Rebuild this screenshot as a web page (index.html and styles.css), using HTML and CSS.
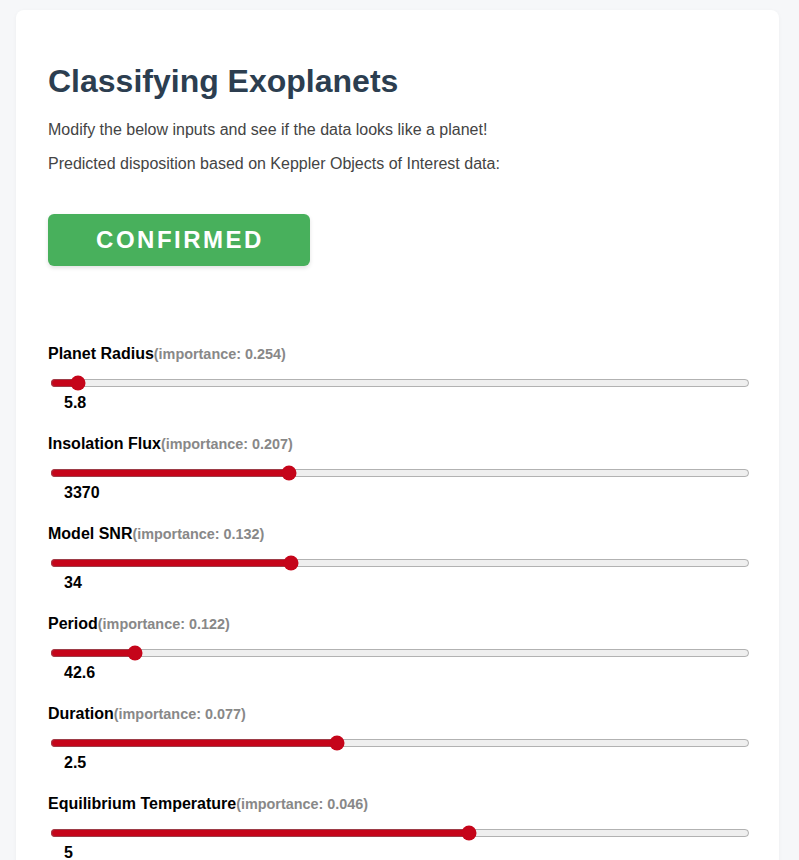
FILE: index.html
```html
<!DOCTYPE html>
<html>
<head>
<meta charset="utf-8">
<link rel="stylesheet" href="styles.css">
</head>
<body>
<main class="card">
  <h1 class="title">Classifying Exoplanets</h1>
  <p class="text">Modify the below inputs and see if the data looks like a planet!</p>
  <p class="text">Predicted disposition based on Keppler Objects of Interest data:</p>
  <div class="result">CONFIRMED</div>
  <div class="fields">
    <div class="field">
      <label class="label">Planet Radius<span class="imp">(importance: 0.254)</span></label>
      <input class="slider" type="range" min="0" max="1000" value="29">
      <div class="value">5.8</div>
    </div>
    <div class="field">
      <label class="label">Insolation Flux<span class="imp">(importance: 0.207)</span></label>
      <input class="slider" type="range" min="0" max="1000" value="338">
      <div class="value">3370</div>
    </div>
    <div class="field">
      <label class="label">Model SNR<span class="imp">(importance: 0.132)</span></label>
      <input class="slider" type="range" min="0" max="1000" value="341">
      <div class="value">34</div>
    </div>
    <div class="field">
      <label class="label">Period<span class="imp">(importance: 0.122)</span></label>
      <input class="slider" type="range" min="0" max="1000" value="113">
      <div class="value">42.6</div>
    </div>
    <div class="field">
      <label class="label">Duration<span class="imp">(importance: 0.077)</span></label>
      <input class="slider" type="range" min="0" max="1000" value="408">
      <div class="value">2.5</div>
    </div>
    <div class="field">
      <label class="label">Equilibrium Temperature<span class="imp">(importance: 0.046)</span></label>
      <input class="slider" type="range" min="0" max="1000" value="601">
      <div class="value">5</div>
    </div>
  </div>
</main>
</body>
</html>
```
FILE: styles.css
```css
html, body {
  margin: 0;
  background: #f6f7f9;
}
body {
  padding: 10px 20px 40px 16px;
  font-family: "Liberation Sans", Arial, sans-serif;
}
.card {
  background: #ffffff;
  border-radius: 8px;
  padding: 32px;
  box-shadow: 0 1px 4px rgba(0, 0, 0, 0.04);
}
.title {
  margin: 21px 0;
  font-size: 32px;
  font-weight: bold;
  color: #2c3e50;
}
.text {
  margin: 16px 0;
  font-size: 16px;
  color: #444444;
}
.result {
  margin-top: 41px;
  width: 262px;
  height: 52px;
  box-sizing: border-box;
  display: flex;
  align-items: center;
  justify-content: center;
  padding-left: 2px;
  background: #48b05c;
  color: #ffffff;
  border-radius: 6px;
  font-size: 24px;
  font-weight: bold;
  letter-spacing: 2.5px;
  box-shadow: 0 2px 4px rgba(0, 0, 0, 0.12);
}
.fields {
  margin-top: 79px;
  display: flex;
  flex-direction: column;
  gap: 23px;
}
.field {
  display: flex;
  flex-direction: column;
}
.label {
  font-size: 16px;
  font-weight: bold;
  color: #000;
}
.imp {
  font-size: 14.4px;
  color: #888888;
}
.slider {
  width: 700px;
  margin: 12px 2px 3px;
  accent-color: #c5051a;
}
.value {
  padding-left: 16px;
  font-size: 16px;
  font-weight: bold;
  color: #000;
}
```
